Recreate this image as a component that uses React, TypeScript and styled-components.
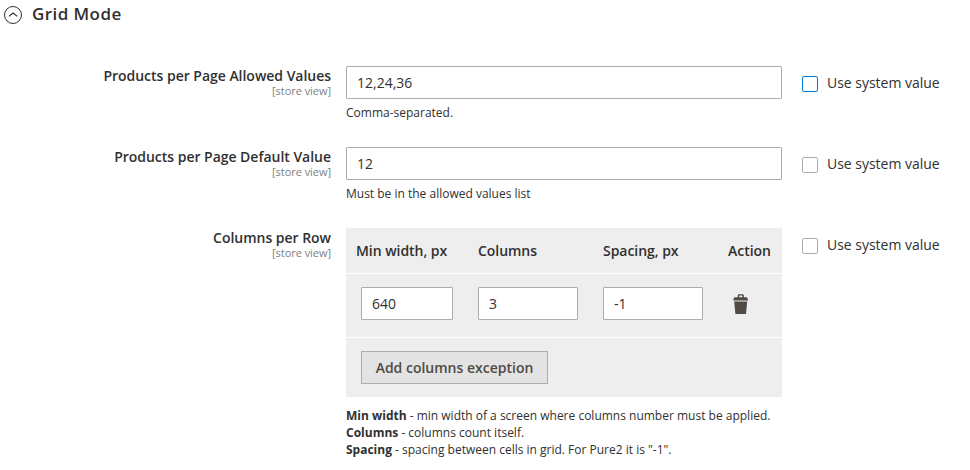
import React from 'react';
import styled, { createGlobalStyle } from 'styled-components';

const Global = createGlobalStyle`
  *{box-sizing:border-box}
  body{margin:0;background:#fff;color:#303030;font-family:"Open Sans",sans-serif;font-size:14px;line-height:19px}
`;
const Page = styled.main`width:970px;height:470px;overflow:hidden;`;
const Header = styled.header`display:flex;align-items:center;gap:10px;height:28px;padding-left:4px;`;
const Collapse = styled.svg`display:block;margin-top:2px;`;
const Title = styled.h1`margin:0;font-size:17px;line-height:24px;font-weight:600;letter-spacing:.42px;`;
const Fields = styled.div`padding-top:38px;`;
const Field = styled.section<{ $height?: number }>`display:grid;grid-template-columns:331px 436px 1fr;column-gap:15px;height:${p => p.$height ?? 81}px;`;
const Label = styled.div`padding-top:1px;text-align:right;font-weight:600;line-height:18px;letter-spacing:-.025px;`;
const Scope = styled.div`font-size:11px;line-height:11px;color:#808080;font-weight:400;letter-spacing:-.04px;`;
const Input = styled.input<{ $width?: string }>`display:block;width:${p => p.$width ?? '100%'};height:33px;border:1px solid #adadad;border-radius:1px;padding:0 10px;background:#fff;color:#303030;font:14px "Open Sans",sans-serif;`;
const Note = styled.div<{ $gap?: number }>`font-size:12px;line-height:17px;margin-top:${p => p.$gap ?? 5}px;`;
const Check = styled.label`display:flex;align-items:flex-start;gap:9px;padding:7px 0 0 5px;white-space:nowrap;letter-spacing:-.02px;`;
const Box = styled.span<{ $active?: boolean }>`width:16px;height:16px;margin-top:3px;border:1px solid ${p => p.$active ? '#007bdb' : '#adadad'};border-radius:2px;`;
const Table = styled.div`background:#eee;`;
const Row = styled.div<{ $height: number }>`display:grid;grid-template-columns:122px 125px 125px 64px;height:${p => p.$height}px;align-items:center;border-bottom:1px solid #fff;`;
const Heading = styled.div`font-weight:600;padding-left:10px;letter-spacing:-.04px;`;
const Cell = styled.div<{ $inset?: number }>`align-self:start;padding:13px 0 0 ${p => p.$inset ?? 10}px;`;
const Trash = styled.svg`display:block;margin-top:7px;`;
const Footer = styled.div`height:59px;padding:13px 15px;`;
const Button = styled.button`width:187px;height:33px;border:1px solid #adadad;background:#e3e3e3;color:#514943;font:600 14px "Open Sans",sans-serif;padding:0;`;

const System = ({ active = false }: { active?: boolean }) => <Check><Box $active={active} />Use system value</Check>;
const Name = ({ children }: { children: React.ReactNode }) => <Label>{children}<Scope>[store view]</Scope></Label>;

export default function App() {
  return <><Global /><Page>
    <Header>
      <Collapse width="18" height="18" viewBox="0 0 18 18" fill="none" stroke="#303030"><circle cx="9" cy="9" r="8.5" /><path d="m4.9 10.4 4.2-3.3 4.2 3.3" strokeWidth="1.2" /></Collapse>
      <Title>Grid Mode</Title>
    </Header>
    <Fields>
      <Field><Name>Products per Page Allowed Values</Name><div><Input defaultValue="12,24,36" /><Note>Comma-separated.</Note></div><System active /></Field>
      <Field><Name>Products per Page Default Value</Name><div><Input defaultValue="12" /><Note>Must be in the allowed values list</Note></div><System /></Field>
      <Field $height={242}><Name>Columns per Row</Name><div><Table>
        <Row $height={46}><Heading>Min width, px</Heading><Heading>Columns</Heading><Heading>Spacing, px</Heading><Heading>Action</Heading></Row>
        <Row $height={64}>
          <Cell $inset={15}><Input $width="92px" defaultValue="640" /></Cell>
          <Cell><Input $width="100px" defaultValue="3" /></Cell>
          <Cell><Input $width="100px" defaultValue="-1" /></Cell>
          <Cell $inset={15}><Trash width="16" height="20" viewBox="0 0 16 20" fill="#514943"><path d="M4.8 3.2V1.2Q4.8.2 5.8.2h4q1 0 1 1v2h2.4q1.5 0 1.8 3.2H.3Q.6 3.2 2 3.2zm1.5 0h3V1.4h-3z" /><path d="M1.2 7.5h13L13 20H2.4z" /></Trash></Cell>
        </Row>
        <Footer><Button>Add columns exception</Button></Footer>
      </Table><Note $gap={10}><b>Min width</b> - min width of a screen where columns number must be applied.<br /><b>Columns</b> - columns count itself.<br /><b>Spacing</b> - spacing between cells in grid. For Pure2 it is "-1".</Note></div><System /></Field>
    </Fields>
  </Page></>;
}
